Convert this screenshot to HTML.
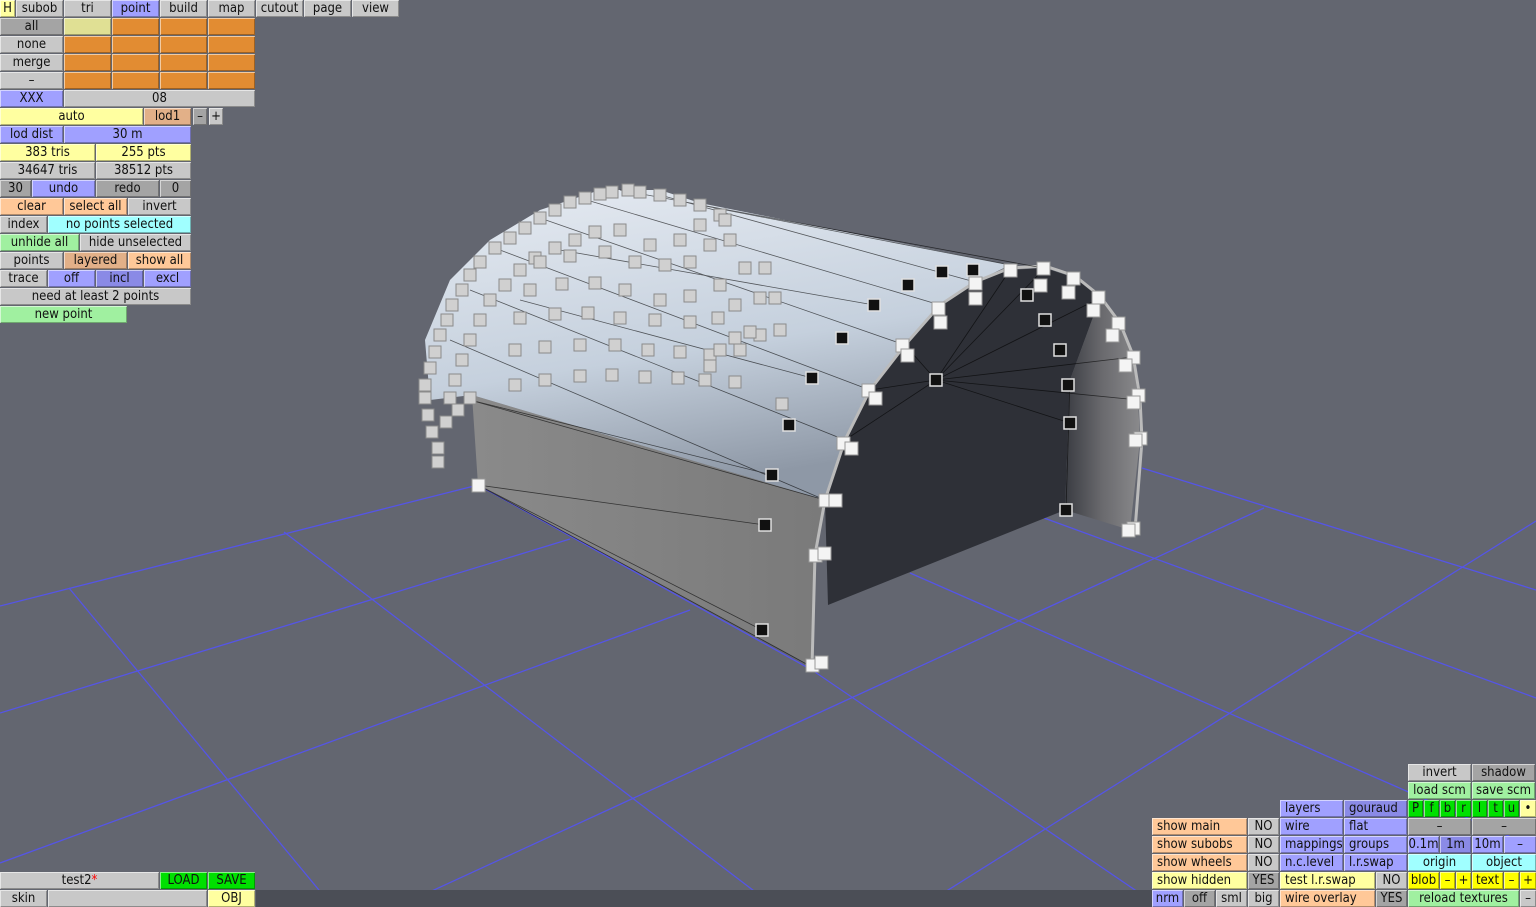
<!DOCTYPE html>
<html><head><meta charset="utf-8"><style>
html,body{margin:0;padding:0}
body{width:1536px;height:907px;background:#636670;position:relative;overflow:hidden;font-family:"DejaVu Sans Condensed","DejaVu Sans","Liberation Sans",sans-serif}
.b{position:absolute;height:17px;line-height:17px;font-size:13px;text-align:center;color:#111;background:#c8c8c8;box-shadow:inset 1px 1px rgba(255,255,255,.55),inset -1px -1px rgba(0,0,0,.3);white-space:nowrap;overflow:hidden}
.l{text-align:left;padding-left:5px;box-sizing:border-box}
.g{background:#c8c8c8}.dg{background:#a4a4a4}.o{background:#e28c32}.y{background:#ffffa0}.yl{background:#e0e094}
.bl{background:#a0a0ff}.db{background:#8a8ae6}.pe{background:#ffc898}.tn{background:#e2b088}
.cy{background:#a0ffff}.gr{background:#a0f0a0}.bg{background:#00e000}.yy{background:#ffff00}
svg{position:absolute;left:0;top:0}
</style></head><body>
<svg width="1536" height="907" viewBox="0 0 1536 907">
<defs>
<linearGradient id="top" x1="0" y1="0" x2="0.3" y2="1"><stop offset="0" stop-color="#e6ebf2"/><stop offset="0.6" stop-color="#c5d0dd"/><stop offset="1" stop-color="#8e98a6"/></linearGradient>
<linearGradient id="side" x1="0" y1="0" x2="1" y2="0"><stop offset="0" stop-color="#8a8a8a"/><stop offset="1" stop-color="#7a7a7a"/></linearGradient>
<linearGradient id="inw" x1="0" y1="0" x2="1" y2="0"><stop offset="0" stop-color="#3a3c42"/><stop offset="0.5" stop-color="#6a6a6e"/><stop offset="1" stop-color="#8a8a8c"/></linearGradient>
</defs>
<g stroke="#5555e6" stroke-width="1.3" fill="none">
<line x1="0" y1="606" x2="478" y2="485"/>
<line x1="0" y1="713" x2="570" y2="539"/>
<line x1="0" y1="863" x2="690" y2="610"/>
<line x1="397" y1="907" x2="1264" y2="508"/>
<line x1="921" y1="907" x2="1536" y2="521"/>
<polyline points="478,485 812,670 1160,907"/>
<line x1="284" y1="532" x2="775" y2="907"/>
<line x1="69" y1="588" x2="333" y2="907"/>
<line x1="910" y1="573" x2="1536" y2="848"/>
<line x1="1142" y1="468" x2="1536" y2="590"/>
<line x1="1044" y1="518" x2="1536" y2="698"/>
</g>
<rect x="256" y="890" width="896" height="17" fill="#4b4e56"/>
<polygon points="472,395 478,485 812,667 815,555 825,500" fill="url(#side)"/>
<polygon points="828,605 825,500 845,440 870,390 905,345 940,305 975,282 1010,270 1045,268 1075,278 1100,298 1070,380 1065,510" fill="#2e3037"/>
<polygon points="1065,510 1070,380 1100,298 1120,325 1133,357 1138,400 1140,440 1130,530" fill="url(#inw)"/>
<polygon points="472,395 430,400 425,340 450,280 490,240 540,210 600,190 660,190 700,203 1010,265 975,282 940,305 905,345 870,390 845,440 825,500" fill="url(#top)"/>
<polyline points="812,667 815,555 825,500 845,440 870,390 905,345 940,305 975,282 1010,268 1045,266 1075,276 1100,296 1120,323 1133,355 1140,398 1142,440 1135,530" fill="none" stroke="#bbb" stroke-width="3"/>
<g stroke="#000" stroke-width="0.8" opacity="0.6" fill="none">
<line x1="478" y1="485" x2="812" y2="667"/><line x1="478" y1="485" x2="765" y2="525"/><line x1="470" y1="400" x2="772" y2="475"/><line x1="470" y1="400" x2="825" y2="500"/><line x1="478" y1="485" x2="762" y2="630"/>
<line x1="700" y1="205" x2="1010" y2="265"/><line x1="660" y1="195" x2="975" y2="282"/><line x1="620" y1="190" x2="1043" y2="268"/><line x1="580" y1="198" x2="940" y2="305"/><line x1="540" y1="218" x2="905" y2="345"/><line x1="500" y1="250" x2="870" y2="390"/><line x1="470" y1="290" x2="845" y2="440"/><line x1="450" y1="340" x2="825" y2="500"/><line x1="520" y1="300" x2="812" y2="378"/><line x1="560" y1="250" x2="874" y2="305"/>
<line x1="936" y1="380" x2="1010" y2="270"/><line x1="936" y1="380" x2="1045" y2="268"/><line x1="936" y1="380" x2="1100" y2="298"/><line x1="936" y1="380" x2="1133" y2="357"/><line x1="936" y1="380" x2="1138" y2="400"/><line x1="936" y1="380" x2="1070" y2="423"/><line x1="936" y1="380" x2="905" y2="345"/><line x1="936" y1="380" x2="870" y2="390"/><line x1="936" y1="380" x2="845" y2="440"/><line x1="1066" y1="510" x2="1070" y2="380"/>
</g>
<g fill="#d0d0d0" stroke="#8a8a8a" stroke-width="1">
<rect x="432" y="456" width="12" height="12"/><rect x="432" y="442" width="12" height="12"/><rect x="426" y="426" width="12" height="12"/><rect x="422" y="409" width="12" height="12"/><rect x="419" y="392" width="12" height="12"/><rect x="419" y="379" width="12" height="12"/><rect x="424" y="362" width="12" height="12"/><rect x="429" y="346" width="12" height="12"/><rect x="434" y="329" width="12" height="12"/><rect x="441" y="314" width="12" height="12"/><rect x="446" y="299" width="12" height="12"/><rect x="456" y="284" width="12" height="12"/><rect x="464" y="269" width="12" height="12"/><rect x="474" y="256" width="12" height="12"/><rect x="489" y="242" width="12" height="12"/><rect x="504" y="232" width="12" height="12"/><rect x="519" y="222" width="12" height="12"/><rect x="534" y="212" width="12" height="12"/><rect x="549" y="204" width="12" height="12"/><rect x="564" y="196" width="12" height="12"/><rect x="579" y="192" width="12" height="12"/><rect x="594" y="188" width="12" height="12"/><rect x="606" y="186" width="12" height="12"/><rect x="622" y="184" width="12" height="12"/><rect x="634" y="186" width="12" height="12"/><rect x="654" y="189" width="12" height="12"/><rect x="674" y="194" width="12" height="12"/><rect x="694" y="199" width="12" height="12"/><rect x="714" y="209" width="12" height="12"/>
<rect x="444" y="392" width="12" height="12"/><rect x="449" y="374" width="12" height="12"/><rect x="456" y="354" width="12" height="12"/><rect x="464" y="334" width="12" height="12"/><rect x="474" y="314" width="12" height="12"/><rect x="484" y="294" width="12" height="12"/><rect x="499" y="279" width="12" height="12"/><rect x="514" y="264" width="12" height="12"/><rect x="529" y="252" width="12" height="12"/><rect x="549" y="242" width="12" height="12"/><rect x="569" y="234" width="12" height="12"/>
<rect x="464" y="392" width="12" height="12"/><rect x="452" y="404" width="12" height="12"/><rect x="440" y="416" width="12" height="12"/>
<rect x="509" y="379" width="12" height="12"/><rect x="539" y="374" width="12" height="12"/><rect x="574" y="370" width="12" height="12"/><rect x="606" y="369" width="12" height="12"/><rect x="639" y="371" width="12" height="12"/><rect x="672" y="372" width="12" height="12"/><rect x="699" y="374" width="12" height="12"/>
<rect x="509" y="344" width="12" height="12"/><rect x="539" y="341" width="12" height="12"/><rect x="574" y="339" width="12" height="12"/><rect x="609" y="339" width="12" height="12"/><rect x="642" y="344" width="12" height="12"/><rect x="674" y="346" width="12" height="12"/><rect x="704" y="349" width="12" height="12"/><rect x="734" y="344" width="12" height="12"/><rect x="754" y="329" width="12" height="12"/><rect x="774" y="324" width="12" height="12"/>
<rect x="514" y="312" width="12" height="12"/><rect x="549" y="308" width="12" height="12"/><rect x="582" y="307" width="12" height="12"/><rect x="614" y="312" width="12" height="12"/><rect x="649" y="314" width="12" height="12"/><rect x="684" y="316" width="12" height="12"/><rect x="712" y="312" width="12" height="12"/><rect x="729" y="299" width="12" height="12"/><rect x="754" y="292" width="12" height="12"/><rect x="769" y="292" width="12" height="12"/>
<rect x="524" y="284" width="12" height="12"/><rect x="556" y="278" width="12" height="12"/><rect x="589" y="277" width="12" height="12"/><rect x="619" y="284" width="12" height="12"/><rect x="654" y="294" width="12" height="12"/><rect x="684" y="290" width="12" height="12"/><rect x="714" y="279" width="12" height="12"/><rect x="739" y="262" width="12" height="12"/><rect x="759" y="262" width="12" height="12"/>
<rect x="534" y="256" width="12" height="12"/><rect x="564" y="250" width="12" height="12"/><rect x="599" y="246" width="12" height="12"/><rect x="629" y="256" width="12" height="12"/><rect x="659" y="259" width="12" height="12"/><rect x="684" y="256" width="12" height="12"/><rect x="704" y="239" width="12" height="12"/><rect x="724" y="234" width="12" height="12"/>
<rect x="589" y="226" width="12" height="12"/><rect x="614" y="224" width="12" height="12"/><rect x="644" y="239" width="12" height="12"/><rect x="674" y="234" width="12" height="12"/><rect x="694" y="219" width="12" height="12"/><rect x="719" y="214" width="12" height="12"/>
<rect x="704" y="360" width="12" height="12"/><rect x="714" y="344" width="12" height="12"/><rect x="729" y="332" width="12" height="12"/><rect x="744" y="326" width="12" height="12"/><rect x="729" y="376" width="12" height="12"/><rect x="776" y="398" width="12" height="12"/>
</g>
<g fill="#111" stroke="#e0e0e0" stroke-width="1.5">
<rect x="936" y="266" width="12" height="12"/><rect x="967" y="264" width="12" height="12"/><rect x="902" y="279" width="12" height="12"/><rect x="868" y="299" width="12" height="12"/><rect x="836" y="332" width="12" height="12"/><rect x="806" y="372" width="12" height="12"/><rect x="783" y="419" width="12" height="12"/><rect x="766" y="469" width="12" height="12"/><rect x="759" y="519" width="12" height="12"/><rect x="756" y="624" width="12" height="12"/><rect x="1021" y="289" width="12" height="12"/><rect x="1039" y="314" width="12" height="12"/><rect x="1054" y="344" width="12" height="12"/><rect x="1062" y="379" width="12" height="12"/><rect x="1064" y="417" width="12" height="12"/><rect x="1060" y="504" width="12" height="12"/><rect x="930" y="374" width="12" height="12"/>
</g>
<g fill="#f4f4f4" stroke="#999" stroke-width="1">
<rect x="1037" y="262" width="13" height="13"/><rect x="1067" y="272" width="13" height="13"/><rect x="1092" y="291" width="13" height="13"/><rect x="1112" y="317" width="13" height="13"/><rect x="1127" y="351" width="13" height="13"/><rect x="1132" y="389" width="13" height="13"/><rect x="1134" y="432" width="13" height="13"/><rect x="1127" y="522" width="13" height="13"/><rect x="1004" y="264" width="13" height="13"/><rect x="969" y="277" width="13" height="13"/><rect x="932" y="302" width="13" height="13"/><rect x="896" y="339" width="13" height="13"/><rect x="862" y="384" width="13" height="13"/><rect x="837" y="437" width="13" height="13"/><rect x="819" y="494" width="13" height="13"/><rect x="809" y="549" width="13" height="13"/><rect x="806" y="659" width="13" height="13"/>
<rect x="1034" y="279" width="13" height="13"/><rect x="1062" y="286" width="13" height="13"/><rect x="1087" y="304" width="13" height="13"/><rect x="1106" y="329" width="13" height="13"/><rect x="1119" y="359" width="13" height="13"/><rect x="1127" y="396" width="13" height="13"/><rect x="1129" y="434" width="13" height="13"/><rect x="1122" y="524" width="13" height="13"/><rect x="969" y="292" width="13" height="13"/><rect x="934" y="316" width="13" height="13"/><rect x="901" y="349" width="13" height="13"/><rect x="869" y="392" width="13" height="13"/><rect x="845" y="442" width="13" height="13"/><rect x="829" y="494" width="13" height="13"/><rect x="818" y="547" width="13" height="13"/><rect x="815" y="656" width="13" height="13"/><rect x="472" y="479" width="13" height="13"/>
</g>
</svg>

<div class="b y" style="left:0;top:0;width:15px">H</div>
<div class="b" style="left:16px;top:0;width:47px">subob</div>
<div class="b" style="left:64px;top:0;width:47px">tri</div>
<div class="b bl" style="left:112px;top:0;width:47px">point</div>
<div class="b" style="left:160px;top:0;width:47px">build</div>
<div class="b" style="left:208px;top:0;width:47px">map</div>
<div class="b" style="left:256px;top:0;width:47px">cutout</div>
<div class="b" style="left:304px;top:0;width:47px">page</div>
<div class="b" style="left:352px;top:0;width:47px">view</div>

<div class="b dg" style="left:0;top:18px;width:63px">all</div>
<div class="b yl" style="left:64px;top:18px;width:47px"></div>
<div class="b o" style="left:112px;top:18px;width:47px"></div><div class="b o" style="left:160px;top:18px;width:47px"></div><div class="b o" style="left:208px;top:18px;width:47px"></div>
<div class="b" style="left:0;top:36px;width:63px">none</div>
<div class="b o" style="left:64px;top:36px;width:47px"></div><div class="b o" style="left:112px;top:36px;width:47px"></div><div class="b o" style="left:160px;top:36px;width:47px"></div><div class="b o" style="left:208px;top:36px;width:47px"></div>
<div class="b" style="left:0;top:54px;width:63px">merge</div>
<div class="b o" style="left:64px;top:54px;width:47px"></div><div class="b o" style="left:112px;top:54px;width:47px"></div><div class="b o" style="left:160px;top:54px;width:47px"></div><div class="b o" style="left:208px;top:54px;width:47px"></div>
<div class="b" style="left:0;top:72px;width:63px">–</div>
<div class="b o" style="left:64px;top:72px;width:47px"></div><div class="b o" style="left:112px;top:72px;width:47px"></div><div class="b o" style="left:160px;top:72px;width:47px"></div><div class="b o" style="left:208px;top:72px;width:47px"></div>
<div class="b bl" style="left:0;top:90px;width:63px">XXX</div>
<div class="b" style="left:64px;top:90px;width:191px">08</div>
<div class="b y" style="left:0;top:108px;width:143px">auto</div>
<div class="b tn" style="left:144px;top:108px;width:47px">lod1</div>
<div class="b dg" style="left:193px;top:108px;width:14px">–</div>
<div class="b" style="left:209px;top:108px;width:14px">+</div>
<div class="b bl" style="left:0;top:126px;width:63px">lod dist</div>
<div class="b bl" style="left:64px;top:126px;width:127px">30 m</div>
<div class="b y" style="left:0;top:144px;width:95px">383 tris</div>
<div class="b y" style="left:96px;top:144px;width:95px">255 pts</div>
<div class="b" style="left:0;top:162px;width:95px">34647 tris</div>
<div class="b" style="left:96px;top:162px;width:95px">38512 pts</div>
<div class="b dg" style="left:0;top:180px;width:31px">30</div>
<div class="b bl" style="left:32px;top:180px;width:63px">undo</div>
<div class="b dg" style="left:96px;top:180px;width:63px">redo</div>
<div class="b dg" style="left:160px;top:180px;width:31px">0</div>
<div class="b pe" style="left:0;top:198px;width:63px">clear</div>
<div class="b pe" style="left:64px;top:198px;width:63px">select all</div>
<div class="b" style="left:128px;top:198px;width:63px">invert</div>
<div class="b" style="left:0;top:216px;width:47px">index</div>
<div class="b cy" style="left:48px;top:216px;width:143px">no points selected</div>
<div class="b gr" style="left:0;top:234px;width:79px">unhide all</div>
<div class="b" style="left:80px;top:234px;width:111px">hide unselected</div>
<div class="b" style="left:0;top:252px;width:63px">points</div>
<div class="b tn" style="left:64px;top:252px;width:63px">layered</div>
<div class="b pe" style="left:128px;top:252px;width:63px">show all</div>
<div class="b" style="left:0;top:270px;width:47px">trace</div>
<div class="b bl" style="left:48px;top:270px;width:47px">off</div>
<div class="b db" style="left:96px;top:270px;width:47px">incl</div>
<div class="b bl" style="left:144px;top:270px;width:47px">excl</div>
<div class="b" style="left:0;top:288px;width:191px">need at least 2 points</div>
<div class="b gr" style="left:0;top:306px;width:127px">new point</div>

<div class="b" style="left:0;top:872px;width:159px">test2<span style="color:#f00">*</span></div>
<div class="b bg" style="left:160px;top:872px;width:47px">LOAD</div>
<div class="b bg" style="left:208px;top:872px;width:47px">SAVE</div>
<div class="b" style="left:0;top:890px;width:47px">skin</div>
<div class="b" style="left:48px;top:890px;width:159px"></div>
<div class="b y" style="left:208px;top:890px;width:47px">OBJ</div>

<div class="b" style="left:1408px;top:764px;width:63px">invert</div>
<div class="b dg" style="left:1472px;top:764px;width:63px">shadow</div>
<div class="b gr" style="left:1408px;top:782px;width:63px">load scm</div>
<div class="b gr" style="left:1472px;top:782px;width:63px">save scm</div>
<div class="b bl l" style="left:1280px;top:800px;width:63px">layers</div>
<div class="b db l" style="left:1344px;top:800px;width:63px">gouraud</div>
<div class="b bg" style="left:1408px;top:800px;width:15px">P</div>
<div class="b bg" style="left:1424px;top:800px;width:15px">f</div>
<div class="b bg" style="left:1440px;top:800px;width:15px">b</div>
<div class="b bg" style="left:1456px;top:800px;width:15px">r</div>
<div class="b bg" style="left:1472px;top:800px;width:15px">l</div>
<div class="b bg" style="left:1488px;top:800px;width:15px">t</div>
<div class="b bg" style="left:1504px;top:800px;width:15px">u</div>
<div class="b y" style="left:1520px;top:800px;width:16px">•</div>
<div class="b pe l" style="left:1152px;top:818px;width:95px">show main</div>
<div class="b" style="left:1248px;top:818px;width:31px">NO</div>
<div class="b bl l" style="left:1280px;top:818px;width:63px">wire</div>
<div class="b bl l" style="left:1344px;top:818px;width:63px">flat</div>
<div class="b dg" style="left:1408px;top:818px;width:63px">–</div>
<div class="b dg" style="left:1472px;top:818px;width:64px">–</div>
<div class="b pe l" style="left:1152px;top:836px;width:95px">show subobs</div>
<div class="b" style="left:1248px;top:836px;width:31px">NO</div>
<div class="b bl l" style="left:1280px;top:836px;width:63px">mappings</div>
<div class="b bl l" style="left:1344px;top:836px;width:63px">groups</div>
<div class="b bl" style="left:1408px;top:836px;width:31px">0.1m</div>
<div class="b db" style="left:1440px;top:836px;width:31px">1m</div>
<div class="b bl" style="left:1472px;top:836px;width:31px">10m</div>
<div class="b bl" style="left:1504px;top:836px;width:32px">–</div>
<div class="b pe l" style="left:1152px;top:854px;width:95px">show wheels</div>
<div class="b" style="left:1248px;top:854px;width:31px">NO</div>
<div class="b bl l" style="left:1280px;top:854px;width:63px">n.c.level</div>
<div class="b bl l" style="left:1344px;top:854px;width:63px">l.r.swap</div>
<div class="b cy" style="left:1408px;top:854px;width:63px">origin</div>
<div class="b cy" style="left:1472px;top:854px;width:64px">object</div>
<div class="b y l" style="left:1152px;top:872px;width:95px">show hidden</div>
<div class="b dg" style="left:1248px;top:872px;width:31px">YES</div>
<div class="b y l" style="left:1280px;top:872px;width:95px">test l.r.swap</div>
<div class="b" style="left:1376px;top:872px;width:31px">NO</div>
<div class="b yy" style="left:1408px;top:872px;width:31px">blob</div>
<div class="b yy" style="left:1440px;top:872px;width:15px">–</div>
<div class="b yy" style="left:1456px;top:872px;width:15px">+</div>
<div class="b yy" style="left:1472px;top:872px;width:31px">text</div>
<div class="b yy" style="left:1504px;top:872px;width:15px">–</div>
<div class="b yy" style="left:1520px;top:872px;width:16px">+</div>
<div class="b bl" style="left:1152px;top:890px;width:31px">nrm</div>
<div class="b dg" style="left:1184px;top:890px;width:31px">off</div>
<div class="b" style="left:1216px;top:890px;width:31px">sml</div>
<div class="b" style="left:1248px;top:890px;width:31px">big</div>
<div class="b pe l" style="left:1280px;top:890px;width:95px">wire overlay</div>
<div class="b dg" style="left:1376px;top:890px;width:31px">YES</div>
<div class="b gr" style="left:1408px;top:890px;width:111px">reload textures</div>
<div class="b" style="left:1520px;top:890px;width:16px">–</div>
</body></html>
